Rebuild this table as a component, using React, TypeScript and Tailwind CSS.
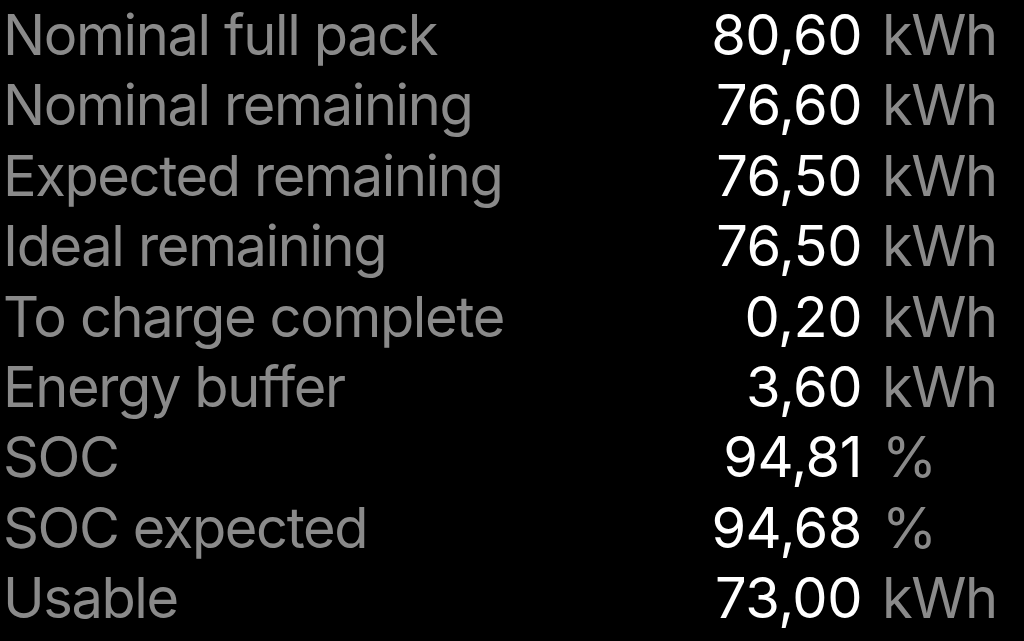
import React from 'react';

type Row = { label: string; value: string; unit: string };

const rows: Row[] = [
  { label: 'Nominal full pack', value: '80,60', unit: 'kWh' },
  { label: 'Nominal remaining', value: '76,60', unit: 'kWh' },
  { label: 'Expected remaining', value: '76,50', unit: 'kWh' },
  { label: 'Ideal remaining', value: '76,50', unit: 'kWh' },
  { label: 'To charge complete', value: '0,20', unit: 'kWh' },
  { label: 'Energy buffer', value: '3,60', unit: 'kWh' },
  { label: 'SOC', value: '94,81', unit: '%' },
  { label: 'SOC expected', value: '94,68', unit: '%' },
  { label: 'Usable', value: '73,00', unit: 'kWh' },
];

const App: React.FC = () => {
  return (
    <div className="w-[1024px] h-[641px] bg-black overflow-hidden font-['Inter',sans-serif] text-[56px] leading-[70.4px]">
      {rows.map((r) => (
        <div key={r.label} className="flex items-baseline">
          <div className="flex-1 pl-[3px] text-[#8a8a8a] tracking-[-1.4px] whitespace-nowrap">{r.label}</div>
          <div className="text-right text-white tracking-[-0.5px] whitespace-nowrap">{r.value}</div>
          <div className="w-[162px] pl-[20px] text-[#8a8a8a] tracking-[-1.5px] whitespace-nowrap">{r.unit}</div>
        </div>
      ))}
    </div>
  );
};

export default App;
